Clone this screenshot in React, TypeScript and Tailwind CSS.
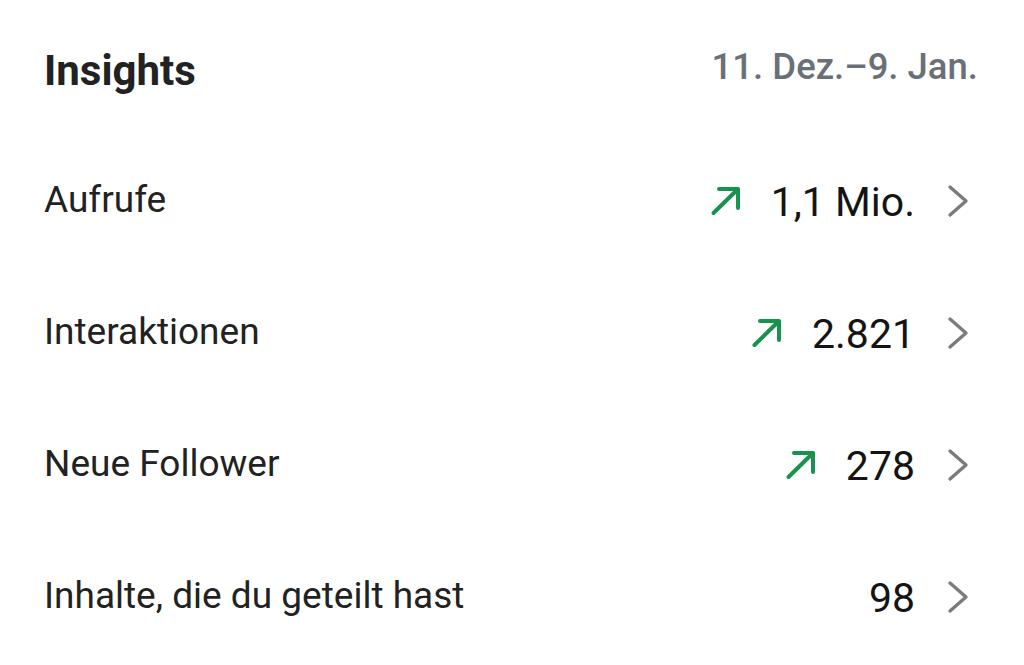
const rows = [
  { label: "Aufrufe", value: "1,1 Mio.", up: true },
  { label: "Interaktionen", value: "2.821", up: true },
  { label: "Neue Follower", value: "278", up: true },
  { label: "Inhalte, die du geteilt hast", value: "98", up: false },
];

const TrendUp = () => (
  <svg width="32" height="30" viewBox="0 0 32 30" fill="none" className="shrink-0">
    <path
      d="M3.5 27 L28 3 M9 3 H28 V22"
      stroke="#18924c"
      strokeWidth="4"
      strokeLinecap="round"
      strokeLinejoin="round"
    />
  </svg>
);

const Chevron = () => (
  <svg width="22" height="34" viewBox="0 0 22 34" fill="none" className="shrink-0">
    <path
      d="M3 3 L19 17 L3 31"
      stroke="#7b7b7b"
      strokeWidth="3.4"
      strokeLinecap="round"
      strokeLinejoin="round"
    />
  </svg>
);

export default function App() {
  return (
    <div className="w-[1024px] h-[665px] bg-white overflow-hidden font-['Roboto',sans-serif]">
      {/* Header */}
      <div className="h-[133px] flex items-center justify-between pl-[44px] pr-[46px]">
        <h2 className="text-[42px] font-bold text-[#222222] leading-none mt-[8px]">Insights</h2>
        <span className="text-[36.5px] font-medium text-[#6b6f76] leading-none mt-[2px]">11. Dez.–9. Jan.</span>
      </div>

      {/* Metrics */}
      {rows.map((row) => (
        <div key={row.label} className="h-[132px] flex items-center justify-between pl-[44px] pr-[55px]">
          <span className="text-[37px] text-[#222222] leading-none">{row.label}</span>
          <div className="flex items-center mt-[6px]">
            {row.up && (
              <span className="mr-[29px] -mt-[2px]">
                <TrendUp />
              </span>
            )}
            <span className="text-[41px] text-[#141414] leading-none">{row.value}</span>
            <span className="ml-[32px] -mt-[2px]">
              <Chevron />
            </span>
          </div>
        </div>
      ))}
    </div>
  );
}
